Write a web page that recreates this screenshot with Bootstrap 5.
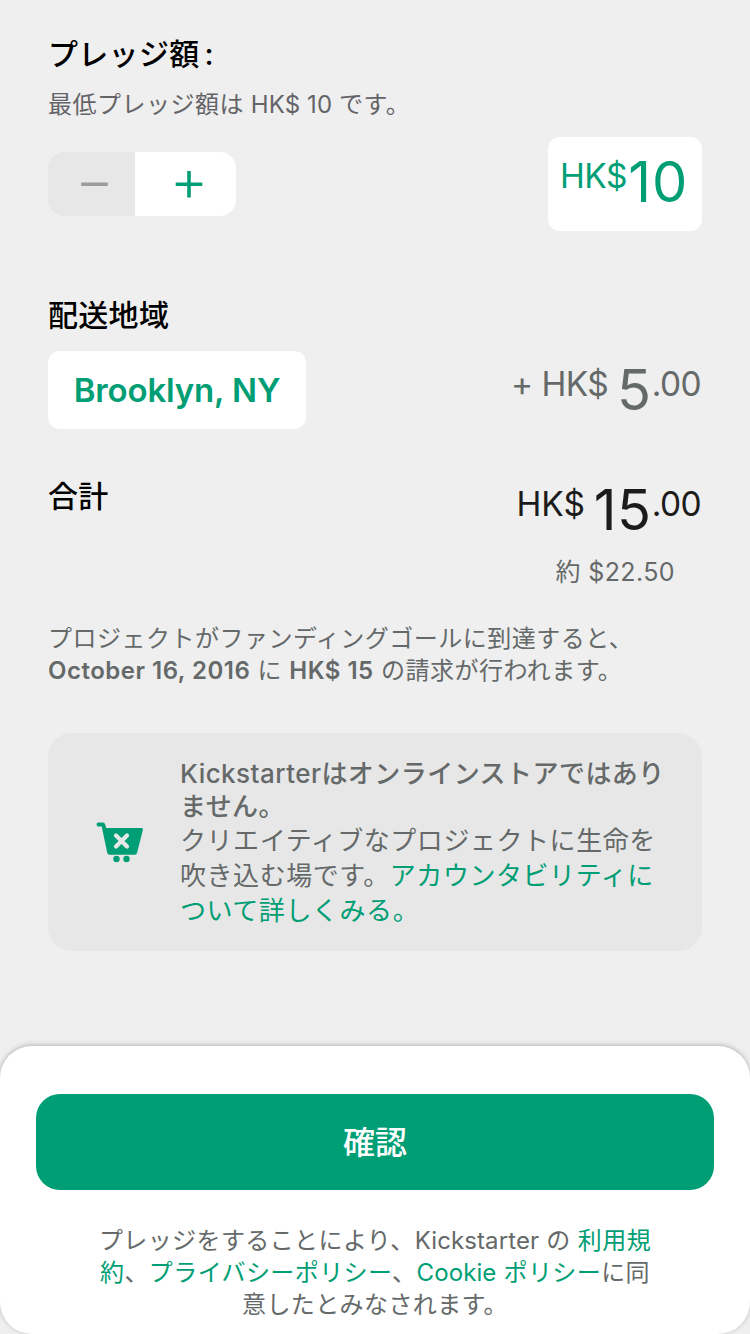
<!DOCTYPE html>
<html lang="ja">
<head>
<meta charset="utf-8">
<meta name="viewport" content="width=device-width, initial-scale=1">
<title>プレッジ</title>
<link href="https://cdn.jsdelivr.net/npm/bootstrap@5.3.0/dist/css/bootstrap.min.css" rel="stylesheet">
<style>
:root { --ks-green: #009e74; --ks-grey: #656969; }
html { font-size: 16px; }
body { font-family: Inter, "Noto Sans CJK JP", sans-serif; background: #efefef; color: #000; }
.page { width: 750px; height: 1334px; }
.pledge { padding: 36px 48px 0; white-space: nowrap; }
.section-title { font-size: 30px; line-height: 36px; font-weight: 500; letter-spacing: .3px; margin: 0; }
.colon { margin-left: 5px; }
.hint { font-size: 24px; line-height: 32px; letter-spacing: .5px; color: #646468; margin: 17px 0 0; }
.latin { letter-spacing: .1px; }
.ks-grey { color: var(--ks-grey); }
.ks-green { color: var(--ks-green); text-decoration: none; }
.amount-row { height: 94px; margin-top: 16px; }
.stepper { width: 188px; height: 64px; border-radius: 16px; overflow: hidden; }
.stepper .btn { border: 0; border-radius: 0; padding: 0; height: 64px; line-height: 1; }
.step-minus { width: 87px; background: #e7e7e7 !important; opacity: 1 !important; padding-left: 7px !important; }
.step-plus { width: 101px; background: #fff !important; padding-left: 7px !important; }
.amount-box { width: 154px; height: 94px; border-radius: 12px; padding: 15px 0 0 12px; }
.amount-box .money { letter-spacing: 1px; }
.amount-box .raised { margin-right: 1.5px; }
.money { font-size: 56px; line-height: 60px; font-weight: 400; height: 60px; letter-spacing: .6px; }
.money .raised { font-size: 33.5px; line-height: 0; vertical-align: 14.5px; letter-spacing: -.6px; }
.region-title { padding-top: 66px; }
.region-row { margin-top: 18px; height: 78px; }
.region-row .money { padding: 9px 1px 0 0; }
.region-btn { width: 258px; height: 78px; border-radius: 12px; font-size: 33px; letter-spacing: -.15px; font-weight: 600; color: var(--ks-green); background: #fff; border: 0; padding: 0; line-height: 78px; }
.total-row { margin-top: 49px; height: 78px; }
.total { color: #1b1b1b; padding: 2px 1px 0 0; }
.total .currency { letter-spacing: -.1px; }
.approx { font-size: 25px; line-height: 32px; letter-spacing: .4px; padding-right: 27px; }
.charge { font-size: 24px; line-height: 32px; letter-spacing: .5px; margin-top: 35px; }
.notice { height: 218px; border-radius: 24px; background: #e7e7e7; border: 0; margin-top: 46px; padding: 24px 0 0 132px; }
.notice-text { font-size: 26px; line-height: 35px; letter-spacing: .55px; margin-left: -1px; }
.notice-title { line-height: 33px; font-weight: 500; letter-spacing: .45px; }
.cart { margin: 65px 37px 0 -84px; flex: none; }
.sheet { height: 288px; border-radius: 32px; padding: 48px 36px 0; box-shadow: 0 -1px 5px rgba(0,0,0,.25); }
.confirm { height: 96px; border-radius: 24px; background: var(--ks-green); color: #fff; font-size: 32px; font-weight: 500; border: 0; padding: 2px 0 0; }
.terms { font-size: 24px; line-height: 32px; letter-spacing: .4px; margin: 35px 0 0; white-space: nowrap; }
</style>
</head>
<body>
<div class="page d-flex flex-column justify-content-between overflow-hidden">
  <main class="pledge">
    <h1 class="section-title">プレッジ額<span class="colon">:</span></h1>
    <p class="hint">最低プレッジ額は<span class="latin"> HK$ 10 </span>です。</p>
    <div class="amount-row d-flex justify-content-between align-items-center">
      <div class="stepper d-flex">
        <button class="btn step-minus" disabled aria-label="減らす"><svg width="28" height="28" viewBox="0 0 28 28"><path d="M.2 14.200h26.600" stroke="#999d9d" stroke-width="3.400"/></svg></button>
        <button class="btn step-plus" aria-label="増やす"><svg width="28" height="28" viewBox="0 0 28 28"><path d="M.7 14.200h26.600M14 .9v26.600" stroke="#009e74" stroke-width="3.600"/></svg></button>
      </div>
      <div class="amount-box bg-white ks-green"><div class="money"><span class="raised">HK$</span><span>10</span></div></div>
    </div>

    <h2 class="section-title region-title">配送地域</h2>
    <div class="region-row d-flex justify-content-between">
      <button class="btn region-btn">Brooklyn, NY</button>
      <div class="money ks-grey"><span class="raised">+ HK$</span><span class="raised"> </span><span>5</span><span class="raised">.00</span></div>
    </div>

    <div class="total-row d-flex justify-content-between">
      <h2 class="section-title">合計</h2>
      <div class="money total"><span class="raised currency">HK$</span><span class="raised"> </span><span>15</span><span class="raised">.00</span></div>
    </div>
    <p class="approx ks-grey text-end mb-0">約 $22.50</p>
    <p class="charge ks-grey mb-0">プロジェクトがファンディングゴールに到達すると、<br><span class="fw-semibold">October 16, 2016</span> に <span class="fw-semibold">HK$ 15</span> の請求が行われます。</p>

    <section class="card notice flex-row">
      <svg class="cart" width="48" height="42" viewBox="0 0 48 42"><path d="M.6 2.200Q.6.6 2.200.6H7q1.600 0 2.100 1.700L10.300 6H45.500q1.800 0 1.400 1.800l-5.800 23q-.5 2-2.400 2H13.500q-1.800 0-2.200-1.800L5.700 4.500H2.300Q.6 4.500.6 2.200z" fill="#009e74"/><path d="m20 13.500 11 11M31 13.500l-11 11" stroke="#e7e7e7" stroke-width="4.200" stroke-linecap="round"/><circle cx="20.500" cy="37" r="3.200" fill="#009e74"/><circle cx="30.500" cy="37" r="3.200" fill="#009e74"/></svg>
      <div class="notice-text ks-grey">
        <div class="notice-title">Kickstarterはオンラインストアではあり<br>ません。</div>
        <div>クリエイティブなプロジェクトに生命を<br>吹き込む場です。<a class="ks-green" href="#">アカウンタビリティに<br>ついて詳しくみる。</a></div>
      </div>
    </section>
  </main>

  <footer class="sheet bg-white">
    <button class="btn confirm w-100">確認</button>
    <p class="terms ks-grey text-center">プレッジをすることにより、<span class="latin">Kickstarter</span> の <a class="ks-green" href="#">利用規<br>約</a>、<a class="ks-green" href="#">プライバシーポリシー</a>、<a class="ks-green" href="#"><span class="latin">Cookie</span> ポリシー</a>に同<br>意したとみなされます。</p>
  </footer>
</div>
<script src="https://cdn.jsdelivr.net/npm/bootstrap@5.3.0/dist/js/bootstrap.bundle.min.js"></script>
</body>
</html>
